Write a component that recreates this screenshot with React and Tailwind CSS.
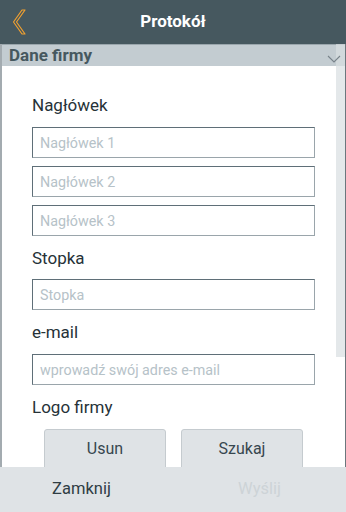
import React from 'react';

const font = { fontFamily: 'Roboto, "Noto Sans", sans-serif' };

const Label = ({ children, className = '' }) => (
  <div className={`text-[17px] leading-[24px] text-[#263238] ${className}`}>{children}</div>
);

const Field = ({ placeholder, className = '' }) => (
  <input
    placeholder={placeholder}
    className={`block w-full h-[31px] px-[7px] text-[14.3px] border border-[#5f6f78] border-b-[#9aa5ab] border-r-[#9aa5ab] bg-white outline-none placeholder:text-[#b6c2c8] ${className}`}
    style={font}
  />
);

export default function App() {
  return (
    <div className="w-[346px] h-[512px] flex flex-col bg-white overflow-hidden" style={font}>
      <header className="h-[44px] shrink-0 bg-[#46585f] relative flex items-center justify-center">
        <svg className="absolute left-[12px] top-[8px]" width="16" height="28" viewBox="0 0 16 28">
          <path d="M10 2 L1.5 14 L10 26 L13 26 L4.5 14 L13 2 Z" fill="none" stroke="#f0a030" strokeWidth="1.2" strokeLinejoin="round" />
        </svg>
        <span className="text-white font-bold text-[17px]">Protokół</span>
      </header>

      <main className="flex-1 relative overflow-hidden border-l-2 border-l-[#a3abb0] border-r border-r-[#6b777d]">
        <div className="h-[22px] bg-[#c3ccd1] flex items-center pl-[7px] border-t border-t-[#9aa6ac]">
          <span className="text-[17px] font-bold text-[#46585f]">Dane firmy</span>
        </div>

        <div className="pl-[30px] pr-[30px] pt-[27px]">
          <Label className="mb-[10px]">Nagłówek</Label>
          <div className="flex flex-col gap-[8px]">
            <Field placeholder="Nagłówek 1" />
            <Field placeholder="Nagłówek 2" />
            <Field placeholder="Nagłówek 3" />
          </div>
          <Label className="mt-[10px] mb-[9px]">Stopka</Label>
          <Field placeholder="Stopka" />
          <Label className="mt-[10px] mb-[10px]">e-mail</Label>
          <Field placeholder="wprowadź swój adres e-mail" />
          <Label className="mt-[10px] mb-[10px]">Logo firmy</Label>
          <div className="flex justify-center gap-[15px]">
            <button className="w-[122px] h-[40px] bg-[#dfe3e6] border border-[#c5cbcf] rounded-t-[3px] text-[16px] text-[#37474f]">Usun</button>
            <button className="w-[122px] h-[40px] bg-[#dfe3e6] border border-[#c5cbcf] rounded-t-[3px] text-[16px] text-[#37474f]">Szukaj</button>
          </div>
        </div>

        <div className="absolute right-0 top-0 w-[9px] h-[313px] bg-[#d9dee1]/70" />
        <svg className="absolute left-[325px] top-[11px]" width="14" height="8" viewBox="0 0 14 8">
          <path d="M1 1 L7 7 L13 1" fill="none" stroke="#78838a" strokeWidth="1.1" />
        </svg>
      </main>

      <footer className="h-[45px] shrink-0 bg-[#dfe3e6] grid grid-cols-2">
        <div className="flex items-center justify-center text-[16.5px] text-[#2f3d44] pr-[10px]">Zamknij</div>
        <div className="flex items-center justify-center text-[16.5px] text-[#cdd3d7]">Wyślij</div>
      </footer>
    </div>
  );
}
